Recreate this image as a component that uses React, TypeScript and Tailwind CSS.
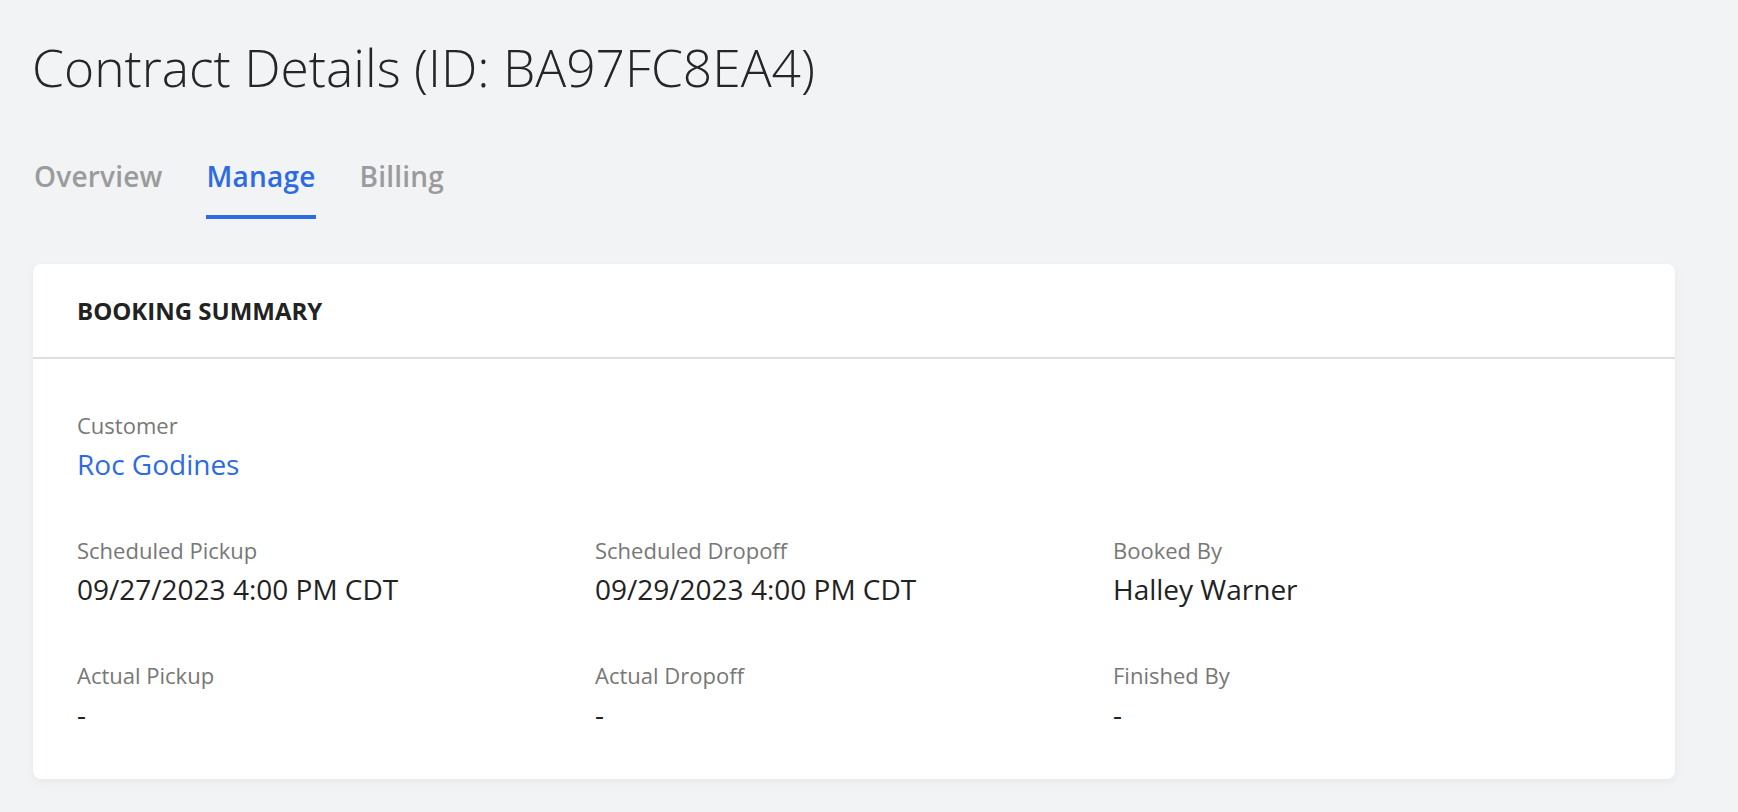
import React from 'react';

interface Field {
  label: string;
  value: string;
}

const rows: Field[][] = [
  [
    { label: 'Scheduled Pickup', value: '09/27/2023 4:00 PM CDT' },
    { label: 'Scheduled Dropoff', value: '09/29/2023 4:00 PM CDT' },
    { label: 'Booked By', value: 'Halley Warner' },
  ],
  [
    { label: 'Actual Pickup', value: '-' },
    { label: 'Actual Dropoff', value: '-' },
    { label: 'Finished By', value: '-' },
  ],
];

const tabs = ['Overview', 'Manage', 'Billing'];

const FieldBlock: React.FC<{ field: Field; link?: boolean }> = ({ field, link }) => (
  <div>
    <div className="text-[22px] leading-[30px] text-[#777777]">{field.label}</div>
    <div className={`mt-[6px] text-[28px] leading-[36px] ${link ? 'text-[#2d6be4]' : 'text-[#222222]'}`}>
      {field.value}
    </div>
  </div>
);

const App: React.FC = () => {
  const active = 'Manage';

  return (
    <div className="min-h-[812px] bg-[#f2f3f5] pl-[33px] pr-[63px] pt-[37px] pb-10 font-['Open_Sans',sans-serif]">
      <h1 className="text-[51.5px] leading-[60px] font-light text-[#262626] -ml-px">
        Contract Details (ID: BA97FC8EA4)
      </h1>

      {/* Tabs */}
      <div className="mt-[59px] flex gap-[42px]">
        {tabs.map((tab) => (
          <div
            key={tab}
            className={`px-[1px] pb-[19px] text-[28px] leading-[40px] font-semibold tracking-[0.2px] border-b-4 ${
              tab === active ? 'text-[#2d6be4] border-[#2d6be4]' : 'text-[#9b9b9b] border-transparent'
            }`}
          >
            {tab}
          </div>
        ))}
      </div>

      {/* Booking summary card */}
      <div className="mt-[45px] bg-white rounded-lg shadow-[0_3px_10px_rgba(0,0,0,0.05)]">
        <div className="h-[95px] flex items-center px-[44px] border-b-2 border-[#dedede]">
          <h3 className="text-[24px] leading-[32px] font-bold text-[#222222] uppercase">Booking Summary</h3>
        </div>

        <div className="px-[44px] pt-[51px] pb-[47px] flex flex-col gap-[53px]">
          <FieldBlock field={{ label: 'Customer', value: 'Roc Godines' }} link />
          {rows.map((row, i) => (
            <div key={i} className="grid grid-cols-3">
              {row.map((f) => (
                <FieldBlock key={f.label} field={f} />
              ))}
            </div>
          ))}
        </div>
      </div>
    </div>
  );
};

export default App;
